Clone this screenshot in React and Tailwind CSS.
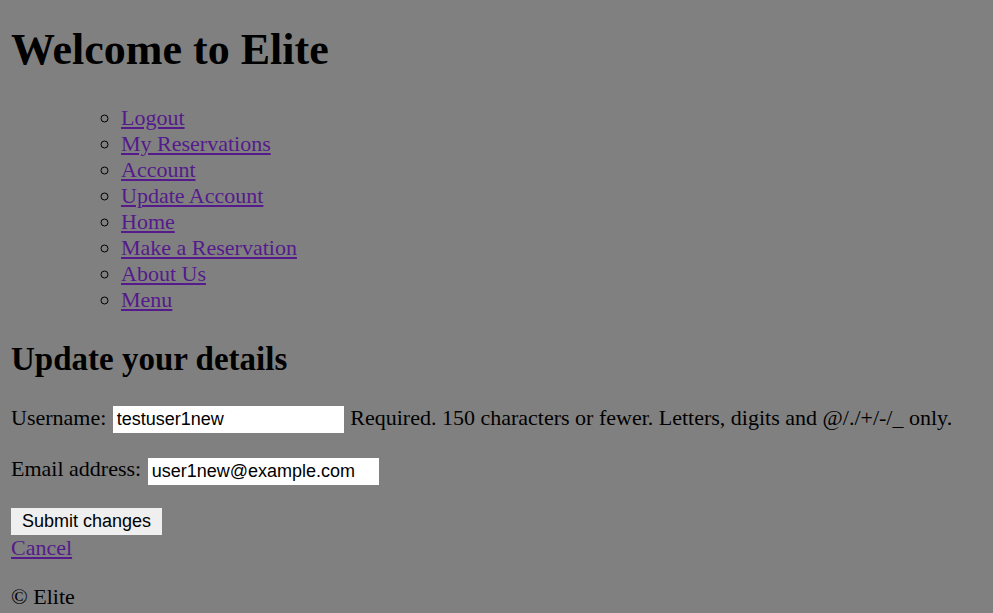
export default function App() {
  const links = [
    'Logout',
    'My Reservations',
    'Account',
    'Update Account',
    'Home',
    'Make a Reservation',
    'About Us',
    'Menu',
  ];

  return (
    <div className="min-h-screen bg-[#808080] px-[11px] pt-[24px] pb-[4px] font-['Liberation_Serif',serif] text-[22px] leading-[26px] text-black">
      <h1 className="mb-[30px] text-[44px] font-bold leading-[51px]">Welcome to Elite</h1>

      {/* nav list (nested, so bullets are circles) */}
      <ul className="mb-[27px] pl-[55px]">
        <li className="list-none">
          <ul className="list-[circle] pl-[55px]">
            {links.map((l) => (
              <li key={l}>
                <a href="#" className="text-[#551A8B] underline">
                  {l}
                </a>
              </li>
            ))}
          </ul>
        </li>
      </ul>

      <h2 className="text-[33px] font-bold leading-[38px]">Update your details</h2>

      <form className="mt-[27px]">
        <p className="mb-[23px]">
          Username:{' '}
          <input
            type="text"
            defaultValue="testuser1new"
            className="ml-px mr-px h-[27px] w-[231px] border-0 bg-white pl-[4px] align-middle font-['Liberation_Sans',Arial,sans-serif] text-[18px] text-black outline-none"
          />{' '}
          Required. 150 characters or fewer. Letters, digits and @/./+/-/_ only.
        </p>
        <p className="mb-[23px]">
          Email address:{' '}
          <input
            type="email"
            defaultValue="user1new@example.com"
            className="ml-px h-[27px] w-[231px] border-0 bg-white pl-[4px] align-middle font-['Liberation_Sans',Arial,sans-serif] text-[18px] text-black outline-none"
          />
        </p>
        <button
          type="button"
          className="block h-[27px] bg-[#efefef] px-[11px] font-['Liberation_Sans',Arial,sans-serif] text-[18px] leading-[27px] text-black"
        >
          Submit changes
        </button>
        <a href="#" className="text-[#551A8B] underline">
          Cancel
        </a>
      </form>

      <p className="mt-[23px]">© Elite</p>
    </div>
  );
}
